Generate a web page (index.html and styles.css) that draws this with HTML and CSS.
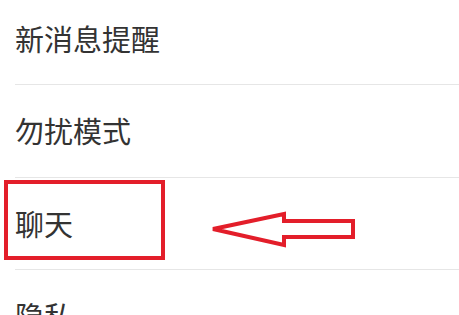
FILE: index.html
```html
<!DOCTYPE html>
<html lang="zh-CN">
<head>
<meta charset="utf-8">
<link rel="stylesheet" href="styles.css">
</head>
<body>
<div class="page">
  <ul class="list">
    <li class="row"><span class="label">新消息提醒</span></li>
    <li class="row"><span class="label">勿扰模式</span></li>
    <li class="row"><span class="label">聊天</span></li>
    <li class="row"><span class="label">隐私</span></li>
  </ul>
  <div class="highlight"></div>
  <svg class="arrow" width="459" height="315" viewBox="0 0 459 315">
    <polygon points="213,229 284,214 284,221 353,221 353,237 284,237 284,245" fill="none" stroke="#e31e2a" stroke-width="4" stroke-linejoin="miter"/>
  </svg>
</div>
</body>
</html>
```
FILE: styles.css
```css
html, body {
  margin: 0;
  padding: 0;
  background: #ffffff;
}
.page {
  position: relative;
  width: 459px;
  height: 315px;
  overflow: hidden;
  font-family: "Noto Sans CJK SC", "Noto Sans", sans-serif;
}
.list {
  list-style: none;
  margin: -7.5px 0 0 0;
  padding: 0;
}
.row {
  box-sizing: border-box;
  height: 92.5px;
  margin-left: 15px;
  border-bottom: 1px solid #e6e6e6;
  display: flex;
  align-items: center;
}
.label {
  font-size: 29px;
  color: #333333;
  line-height: 1;
}
.highlight {
  position: absolute;
  left: 4px;
  top: 180px;
  width: 161px;
  height: 80px;
  box-sizing: border-box;
  border: 4px solid #e31e2a;
}
.arrow {
  position: absolute;
  left: 0;
  top: 0;
}
```
